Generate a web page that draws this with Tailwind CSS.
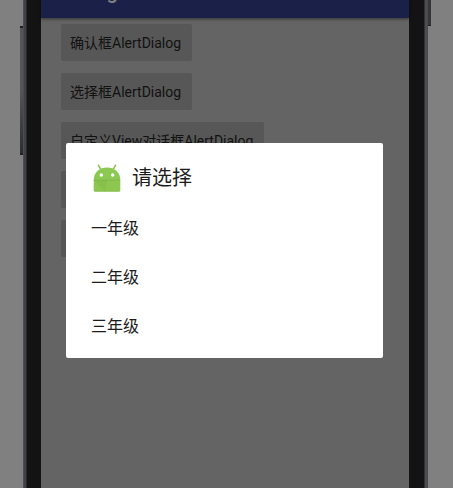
<!DOCTYPE html>
<html lang="zh-CN">
<head>
<meta charset="utf-8">
<meta name="viewport" content="width=device-width, initial-scale=1">
<title>AlertDialog</title>
<script src="https://cdn.jsdelivr.net/npm/@tailwindcss/browser@4"></script>
</head>
<body class="flex h-screen overflow-hidden bg-[#808080] font-['Roboto','Noto_Sans_CJK_SC',sans-serif] text-[#111111]">
  <!-- left side of the device: side key, metal rim, bezel -->
  <div class="flex w-[23px] shrink-0 justify-end pt-[26px]">
    <div class="h-[129px] w-[3px] border-y-2 border-[#202020] bg-linear-to-b from-[#555555] via-[#555555] to-[#2c2e30]"></div>
  </div>
  <div class="w-1 shrink-0 border-x border-l-[#4c4d4f] border-r-[#2a2a2a] bg-[#404144]"></div>
  <div class="w-[14px] shrink-0 bg-[#131313]"></div>

  <main class="relative flex min-w-0 flex-1 flex-col bg-[#646464]">
    <header class="flex h-[18px] shrink-0 items-end bg-[#1a2047] px-5 pb-[14px] shadow-[0_1px_3px_rgba(0,0,0,0.5)]">
      <h1 class="text-xl leading-6 font-medium text-[#808080]">Dialog</h1>
    </header>
    <div class="flex flex-col items-start gap-3 px-5 pt-[6px] text-sm">
      <button class="h-[37px] rounded-xs bg-[#575757] pr-[11px] pl-[9px] whitespace-nowrap">确认框AlertDialog</button>
      <button class="h-[37px] rounded-xs bg-[#575757] pr-[11px] pl-[9px] whitespace-nowrap">选择框AlertDialog</button>
      <button class="h-[37px] rounded-xs bg-[#575757] pr-[11px] pl-[9px] whitespace-nowrap">自定义View对话框AlertDialog</button>
      <button class="h-[37px] w-[130px] rounded-xs bg-[#575757]" aria-label="AlertDialog"></button>
      <button class="h-[37px] w-[130px] rounded-xs bg-[#575757]" aria-label="AlertDialog"></button>
    </div>

    <section role="dialog" aria-labelledby="dialog-title" class="absolute top-[143px] right-[26px] left-[25px] rounded-xs bg-white pt-[18px] pb-[7px] text-[#1c1c1c]">
      <div class="flex h-[34px] items-center gap-[10px] px-[26px]">
        <svg class="size-[30px] shrink-0" viewBox="0 0 30 30" aria-hidden="true">
          <path d="M6.3 2.2 9.2 7M23.7 2.2 20.8 7" stroke="#8bc34a" stroke-width="1.5" stroke-linecap="round"/>
          <path d="M1.7 17.3C1.7 9.3 7.5 4.6 15 4.6S28.3 9.3 28.3 17.3Z" fill="#8bc953"/>
          <path d="M1.7 17.2H28.3V27.3Q28.3 28.6 27 28.6H3Q1.7 28.6 1.7 27.3Z" fill="#8dc750"/>
          <path d="M1.7 17.2H15L13.4 28.6 1.7 17.2Z" fill="#83bb48" opacity=".6"/>
          <path d="M1.7 17.3H28.3" stroke="#75ad3e" stroke-width=".7"/>
          <path d="M2.4 28.3H27.6" stroke="#7eb447" stroke-width=".6"/>
          <circle cx="9.3" cy="12" r="1.7" fill="#fff"/>
          <circle cx="20.7" cy="12" r="1.7" fill="#fff"/>
        </svg>
        <h2 id="dialog-title" class="text-xl">请选择</h2>
      </div>
      <div class="flex flex-col pt-[9px]">
        <button class="h-[49px] px-[25px] text-left text-base">一年级</button>
        <button class="h-[49px] px-[25px] text-left text-base">二年级</button>
        <button class="h-[49px] px-[25px] text-left text-base">三年级</button>
      </div>
    </section>
  </main>

  <!-- right side of the device: bezel, metal rim, power key -->
  <div class="w-[15px] shrink-0 bg-[#131313]"></div>
  <div class="w-1 shrink-0 border-x border-l-[#303133] border-r-[#4a4b4d] bg-[#4c4d52]"></div>
  <div class="w-[25px] shrink-0">
    <div class="h-[26px] w-[3px] border-b border-[#202020] bg-[#363636]"></div>
  </div>
</body>
</html>
